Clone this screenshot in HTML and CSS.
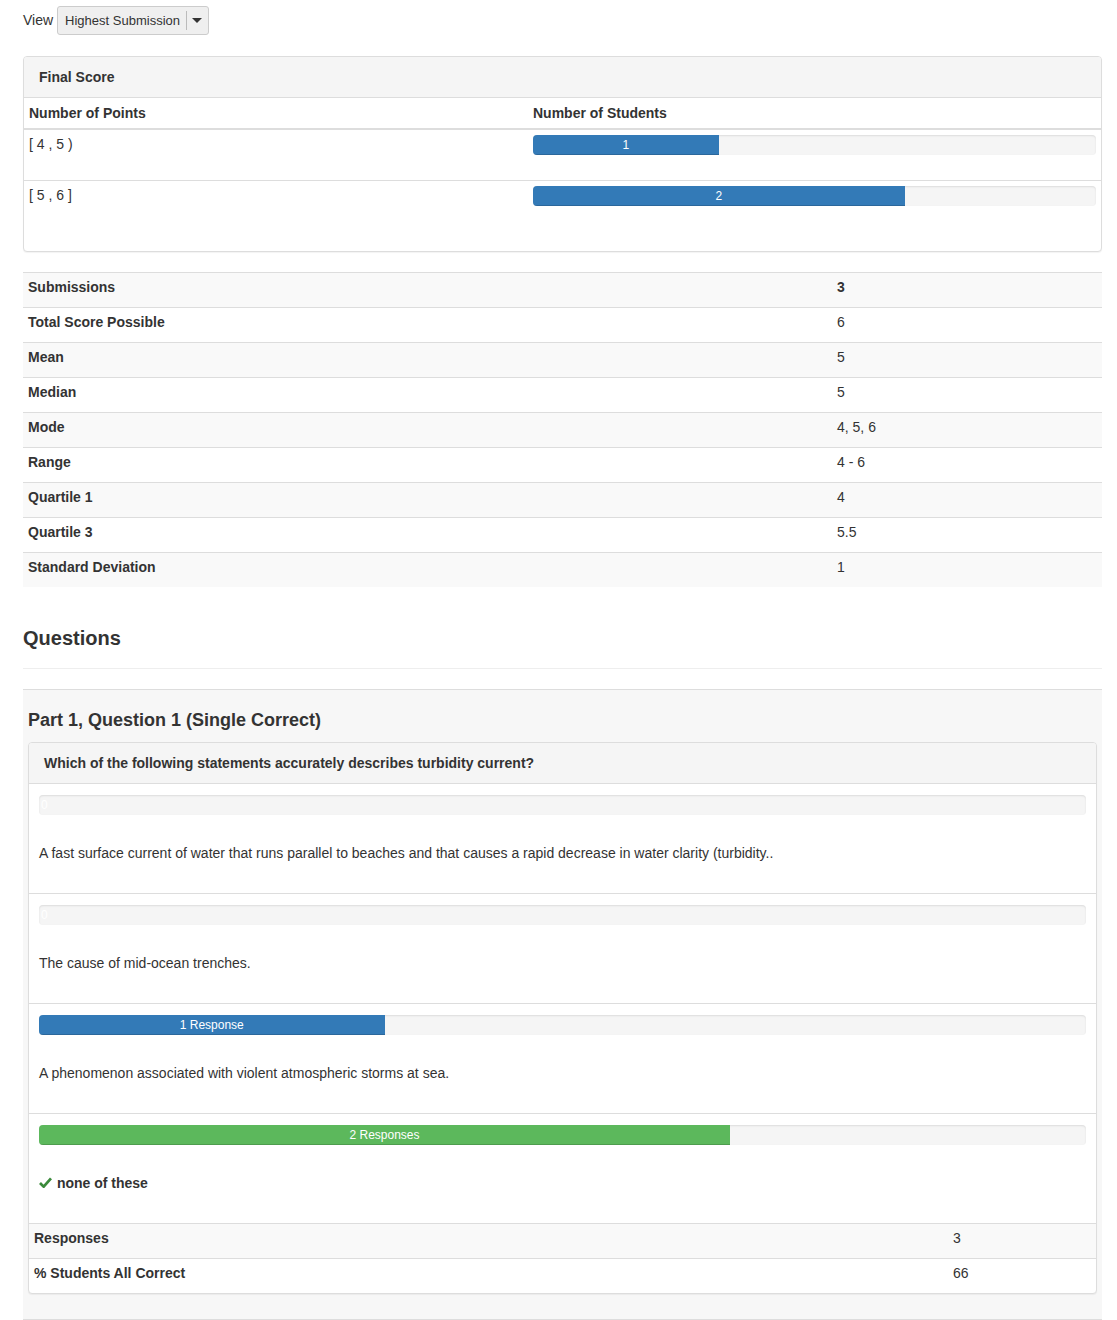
FILE: index.html
```html
<!DOCTYPE html>
<html lang="en">
<head>
  <meta charset="UTF-8">
  <title>Assessment Statistics</title>
  <link rel="stylesheet" href="styles.css">
</head>
<body>
  <div class="view-bar">
    <span class="view-label">View</span>
    <div class="view-select">
      <span class="view-value">Highest Submission</span>
      <span class="view-caret"></span>
    </div>
  </div>

  <div class="panel">
    <div class="panel-heading">Final Score</div>
    <table class="dist-table">
      <thead>
        <tr>
          <th class="dist-range">Number of Points</th>
          <th>Number of Students</th>
        </tr>
      </thead>
      <tbody>
        <tr>
          <td class="dist-range">[ 4 , 5 )</td>
          <td>
            <div class="progress"><div class="bar" style="width: 33%">1</div></div>
          </td>
        </tr>
        <tr>
          <td class="dist-range">[ 5 , 6 ]</td>
          <td>
            <div class="progress"><div class="bar" style="width: 66%">2</div></div>
          </td>
        </tr>
      </tbody>
    </table>
  </div>

  <table class="stats-table">
    <tbody>
      <tr><th>Submissions</th><td><strong>3</strong></td></tr>
      <tr><th>Total Score Possible</th><td>6</td></tr>
      <tr><th>Mean</th><td>5</td></tr>
      <tr><th>Median</th><td>5</td></tr>
      <tr><th>Mode</th><td>4, 5, 6</td></tr>
      <tr><th>Range</th><td>4 - 6</td></tr>
      <tr><th>Quartile 1</th><td>4</td></tr>
      <tr><th>Quartile 3</th><td>5.5</td></tr>
      <tr><th>Standard Deviation</th><td>1</td></tr>
    </tbody>
  </table>

  <h3 class="section-title">Questions</h3>
  <hr class="section-rule">

  <div class="question">
    <h4 class="question-title">Part 1, Question 1 (Single Correct)</h4>
    <div class="panel answer-panel">
      <div class="panel-heading">Which of the following statements accurately describes turbidity current?</div>

      <div class="answer">
        <div class="progress"><span class="empty-label">0</span></div>
        <div class="answer-text">A fast surface current of water that runs parallel to beaches and that causes a rapid decrease in water clarity (turbidity..</div>
      </div>

      <div class="answer">
        <div class="progress"><span class="empty-label">0</span></div>
        <div class="answer-text">The cause of mid-ocean trenches.</div>
      </div>

      <div class="answer">
        <div class="progress"><div class="bar" style="width: 33%">1 Response</div></div>
        <div class="answer-text">A phenomenon associated with violent atmospheric storms at sea.</div>
      </div>

      <div class="answer">
        <div class="progress"><div class="bar bar-success" style="width: 66%">2 Responses</div></div>
        <div class="answer-text correct">
          <svg class="check" viewBox="0 0 14 12" width="13" height="11">
            <path d="M1 6.5 L5 10.5 L13 1.5" fill="none" stroke="#3b8a3b" stroke-width="3"/>
          </svg>
          none of these
        </div>
      </div>

      <table class="question-stats">
        <tbody>
          <tr><th>Responses</th><td>3</td></tr>
          <tr><th>% Students All Correct</th><td>66</td></tr>
        </tbody>
      </table>
    </div>
  </div>
</body>
</html>
```

FILE: styles.css
```css
body {
  margin: 0;
  padding: 6px 15px 0 23px;
  font-family: "Liberation Sans", Arial, sans-serif;
  font-size: 14px;
  line-height: 20px;
  color: #333;
  background: #fff;
}
.view-bar {
  display: flex;
  align-items: center;
  gap: 4px;
  height: 29px;
}
.view-label {
  margin-top: -1px;
}
.view-select {
  display: flex;
  align-items: center;
  height: 27px;
  border: 1px solid #ccc;
  border-radius: 3px;
  background: #efefef;
  font-size: 13px;
}
.view-value {
  padding: 0 6px 0 7px;
  border-right: 1px solid #bbb;
  line-height: 19px;
}
.view-caret {
  width: 0;
  height: 0;
  margin: 0 6px 0 5px;
  border-left: 5px solid transparent;
  border-right: 5px solid transparent;
  border-top: 5px solid #333;
}
.panel {
  margin-top: 21px;
  margin-bottom: 20px;
  border: 1px solid #ddd;
  border-radius: 4px;
  background: #fff;
  box-shadow: 0 1px 1px rgba(0, 0, 0, 0.05);
}
.panel-heading {
  padding: 10px 15px;
  background: #f5f5f5;
  border-bottom: 1px solid #ddd;
  border-radius: 3px 3px 0 0;
  font-weight: bold;
}
table {
  width: 100%;
  border-collapse: collapse;
  border-spacing: 0;
}
.dist-table {
  margin-bottom: 20px;
}
.dist-table th,
.dist-table td {
  padding: 5px;
  text-align: left;
  vertical-align: top;
}
.dist-table th {
  border-bottom: 2px solid #ddd;
}
.dist-table td {
  border-top: 1px solid #ddd;
  padding-top: 4px;
}
.dist-table tbody tr:first-child td {
  border-top: none;
}
.dist-table td .progress {
  margin-top: 1px;
}
.dist-table .dist-range {
  width: 494px;
}
.dist-table .progress {
  margin-bottom: 20px;
}
.progress {
  position: relative;
  height: 20px;
  overflow: hidden;
  background: #f5f5f5;
  border-radius: 4px;
  box-shadow: inset 0 1px 2px rgba(0, 0, 0, 0.1);
}
.bar {
  height: 100%;
  background: #337ab7;
  color: #fff;
  font-size: 12px;
  line-height: 20px;
  text-align: center;
  box-shadow: inset 0 -1px 0 rgba(0, 0, 0, 0.15);
}
.bar-success {
  background: #5cb85c;
}
.empty-label {
  position: absolute;
  left: 2px;
  top: 0;
  color: #fff;
  font-size: 12px;
  line-height: 20px;
}
.stats-table th,
.stats-table td {
  padding: 4px 5px 10px;
  text-align: left;
  border-top: 1px solid #ddd;
}
.stats-table th {
  width: 799px;
}
.stats-table tbody tr:nth-child(odd) {
  background: #f9f9f9;
}
.section-title {
  margin: 40px 0 0;
  font-size: 20px;
  line-height: 22px;
  font-weight: bold;
}
.section-rule {
  margin: 19px 0 20px;
  border: 0;
  border-top: 1px solid #eee;
}
.question {
  padding: 20px 5px 25px;
  background: #f7f7f7;
  border-top: 1px solid #ddd;
  border-bottom: 1px solid #ddd;
}
.question-title {
  margin: 0 0 12px;
  font-size: 18px;
  line-height: 20px;
  font-weight: bold;
}
.answer-panel {
  margin: 0;
}
.answer {
  padding: 11px 10px 30px;
  border-bottom: 1px solid #ddd;
}
.answer .progress {
  margin-bottom: 28px;
}
.answer-text.correct {
  font-weight: bold;
}
.check {
  margin-right: 1px;
}
.question-stats th,
.question-stats td {
  padding: 4px 5px 10px;
  text-align: left;
}
.question-stats th {
  width: 909px;
}
.question-stats tr + tr {
  border-top: 1px solid #ddd;
}
.question-stats tbody tr:nth-child(odd) {
  background: #f9f9f9;
}
```
